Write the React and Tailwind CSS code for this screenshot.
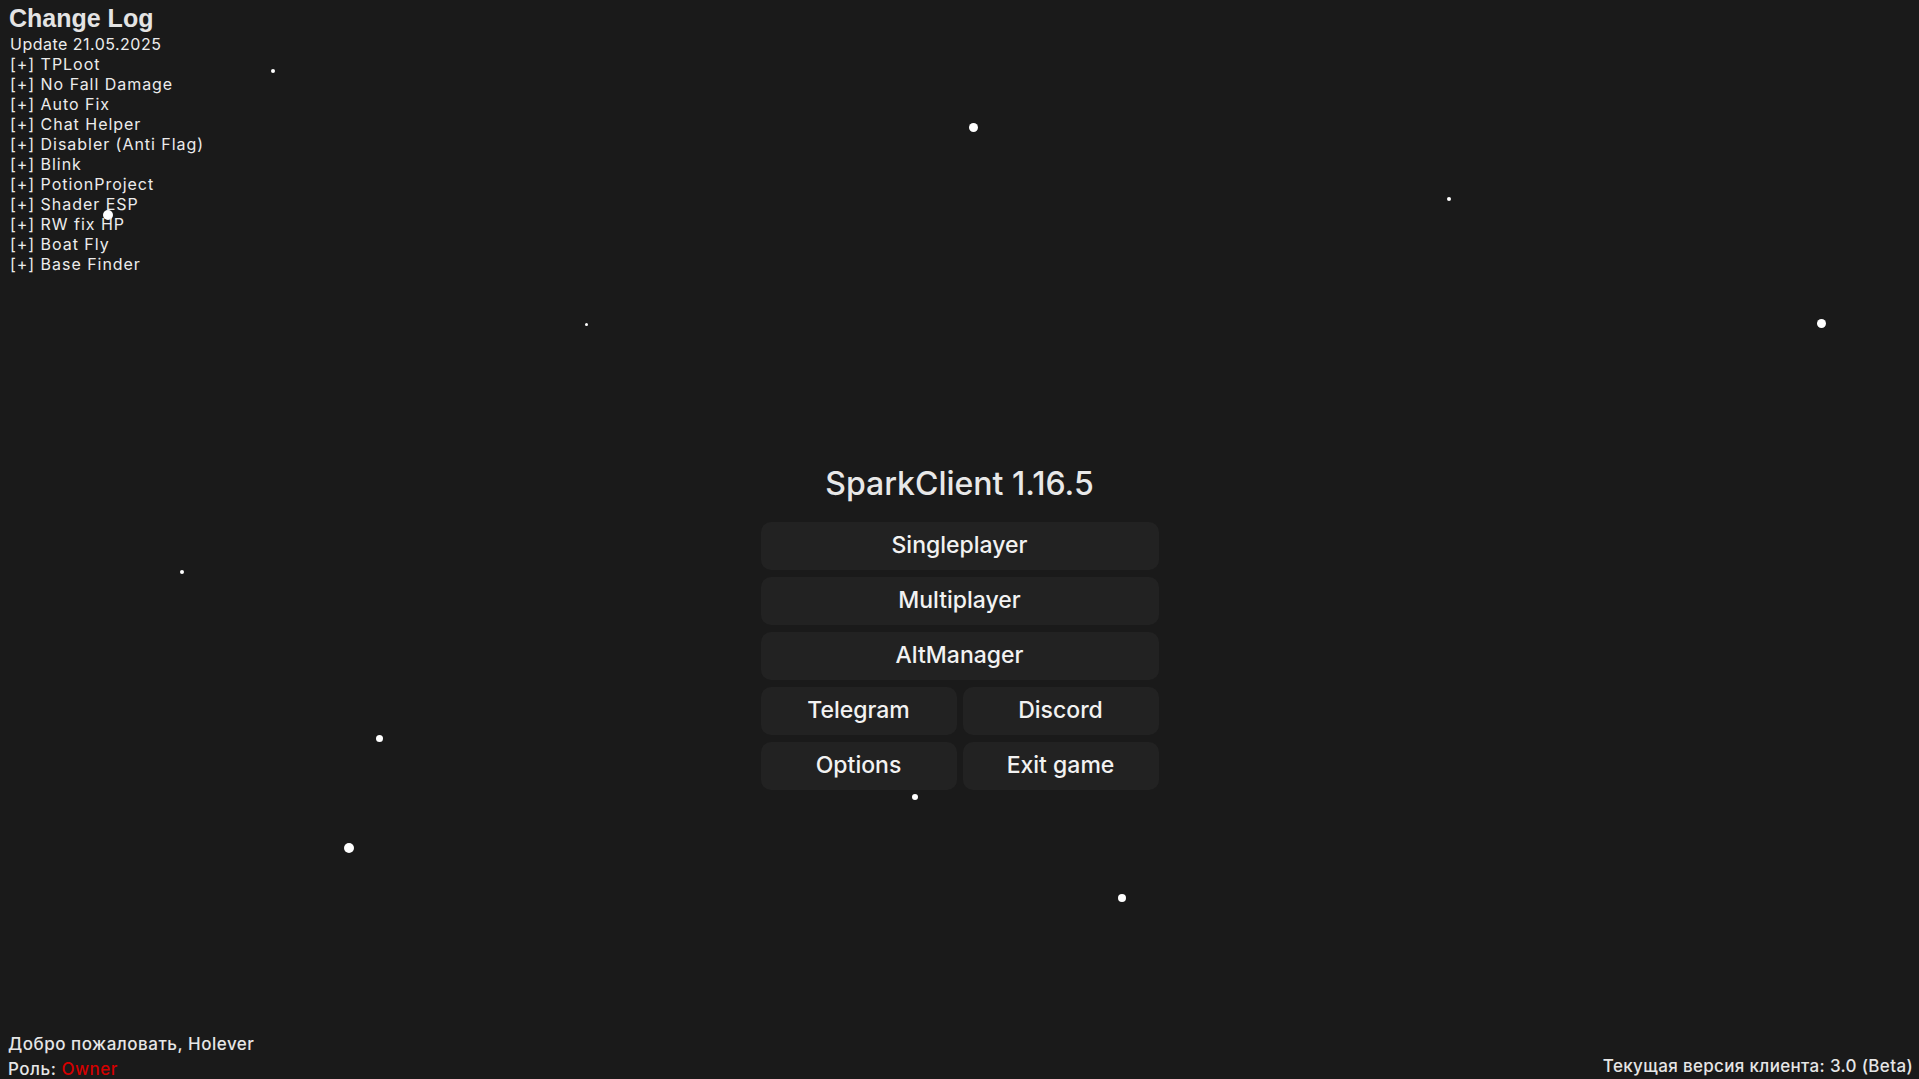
import React from 'react'

const changes = [
  'TPLoot',
  'No Fall Damage',
  'Auto Fix',
  'Chat Helper',
  'Disabler (Anti Flag)',
  'Blink',
  'PotionProject',
  'Shader ESP',
  'RW fix HP',
  'Boat Fly',
  'Base Finder',
]

const stars = [
  { x: 273, y: 71, s: 4 },
  { x: 973, y: 127, s: 9 },
  { x: 1449, y: 199, s: 4 },
  { x: 1821, y: 323, s: 9 },
  { x: 586, y: 324, s: 3 },
  { x: 108, y: 215, s: 10 },
  { x: 182, y: 572, s: 4 },
  { x: 379, y: 738, s: 7 },
  { x: 349, y: 848, s: 10 },
  { x: 915, y: 797, s: 6 },
  { x: 1122, y: 898, s: 8 },
]

function MenuButton({ children }) {
  return (
    <button
      type="button"
      className="h-[48px] w-full rounded-[10px] bg-[#222222] pb-[2px] text-[23px] font-medium leading-none text-[#f2f2f2] hover:bg-[#2a2a2a] transition"
    >
      {children}
    </button>
  )
}

export default function App() {
  return (
    <div
      className="relative flex h-screen w-full flex-col overflow-hidden bg-[#1a1a1a] text-white"
      style={{ fontFamily: 'Inter, "Noto Sans", sans-serif' }}
    >
      {stars.map((st, i) => (
        <span
          key={i}
          className="absolute rounded-full bg-white"
          style={{ left: st.x - st.s / 2, top: st.y - st.s / 2, width: st.s, height: st.s }}
        />
      ))}

      {/* Change log */}
      <div className="relative pl-[9px] pt-[4px]">
        <h1 className="font-['Liberation_Sans',sans-serif] text-[25px] font-bold leading-[28px] text-[#e4e4e4]">
          Change Log
        </h1>
        <div className="mt-[2px] pl-[1px] text-[16px] leading-[20px] tracking-[0.06em] text-[#ececec]">
          <p className="tracking-[0.03em]">Update 21.05.2025</p>
          {changes.map((c) => (
            <p key={c}>[+] {c}</p>
          ))}
        </div>
      </div>

      {/* Main menu */}
      <div className="relative mx-auto mt-[190px] flex w-[398px] flex-col">
        <h2 className="text-center text-[32px] font-medium leading-[40px] text-[#e8e8e8]">
          SparkClient 1.16.5
        </h2>
        <div className="mt-[18px] flex flex-col gap-[7px]">
          <MenuButton>Singleplayer</MenuButton>
          <MenuButton>Multiplayer</MenuButton>
          <MenuButton>AltManager</MenuButton>
          <div className="grid grid-cols-2 gap-[6px]">
            <MenuButton>Telegram</MenuButton>
            <MenuButton>Discord</MenuButton>
          </div>
          <div className="grid grid-cols-2 gap-[6px]">
            <MenuButton>Options</MenuButton>
            <MenuButton>Exit game</MenuButton>
          </div>
        </div>
      </div>

      {/* Footer */}
      <div className="relative mt-auto flex items-end justify-between pl-[8px] pr-[6px] text-[17px] font-medium leading-[20px] text-[#e6e6e6]">
        <div className="flex flex-col gap-[5px] tracking-[0.03em]">
          <p>Добро пожаловать, Holever</p>
          <p>
            Роль: <span className="text-[#d40000]">Owner</span>
          </p>
        </div>
        <p className="mb-[3px] tracking-[0.02em]">Текущая версия клиента: 3.0 (Beta)</p>
      </div>
    </div>
  )
}
